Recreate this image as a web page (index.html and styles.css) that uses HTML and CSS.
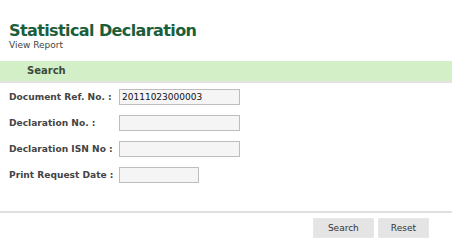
FILE: index.html
```
<!DOCTYPE html>
<html lang="en">
<head>
    <meta charset="UTF-8">
    <title>Statistical Declaration - View Report</title>
    <link rel="stylesheet" href="styles.css">
</head>
<body>

    <!-- Header -->
    <div class="page-head">
        <h1>Statistical Declaration</h1>
        <p class="subtitle">View Report</p>
    </div>

    <!-- Search panel -->
    <div class="panel-title">Search</div>

    <div class="form">
        <div class="row">
            <label class="label">Document Ref. No. :</label>
            <input type="text" class="field" value="20111023000003">
        </div>
        <div class="row">
            <label class="label">Declaration No. :</label>
            <input type="text" class="field">
        </div>
        <div class="row">
            <label class="label">Declaration ISN No :</label>
            <input type="text" class="field">
        </div>
        <div class="row">
            <label class="label">Print Request Date :</label>
            <input type="text" class="field short">
        </div>
    </div>

    <div class="actions">
        <button class="btn btn-search">Search</button>
        <button class="btn">Reset</button>
    </div>

</body>
</html>
```

FILE: styles.css
```
body {
    font-family: "DejaVu Sans", Verdana, sans-serif;
    background: #fff;
    color: #333;
    margin: 0;
    padding: 0;
}

/* Header */
.page-head {
    padding: 22px 9px 0;
}
h1 {
    margin: 0;
    font-size: 16px;
    line-height: 18px;
    color: #1b5e3b;
    letter-spacing: -0.6px;
}
.subtitle {
    margin: 0;
    font-size: 9px;
    line-height: 11px;
    color: #444;
}

/* Panel */
.panel-title {
    margin-top: 10px;
    height: 20px;
    line-height: 20px;
    padding-left: 27px;
    background: #d3efc8;
    border-bottom: 2px solid #e2e2e2;
    font-size: 10px;
    font-weight: bold;
    color: #3c4a3c;
}

/* Form */
.form {
    padding: 6px 0 0 9px;
}
.row {
    display: flex;
    align-items: center;
    height: 16px;
    margin-bottom: 10px;
}
.label {
    width: 110px;
    font-size: 9.1px;
    font-weight: bold;
    color: #444;
}
.field {
    box-sizing: border-box;
    width: 121px;
    height: 16px;
    margin: 0;
    padding: 0 2px;
    border: 1px solid #bdbdbd;
    background: #f5f5f5;
    font-family: "DejaVu Sans", Verdana, sans-serif;
    font-size: 9px;
    color: #111;
}
.field.short {
    width: 80px;
}

/* Buttons */
.actions {
    margin-top: 28px;
    border-top: 2px solid #e0e0e0;
    display: flex;
    justify-content: flex-end;
    gap: 4px;
    padding: 5px 23px 0 0;
}
.btn {
    height: 20px;
    padding: 0 12px;
    border: 1px solid #e8e8e8;
    background: #e4e4e4;
    font-family: "DejaVu Sans", Verdana, sans-serif;
    font-size: 9px;
    color: #333;
}
.btn-search {
    min-width: 61px;
}
```
